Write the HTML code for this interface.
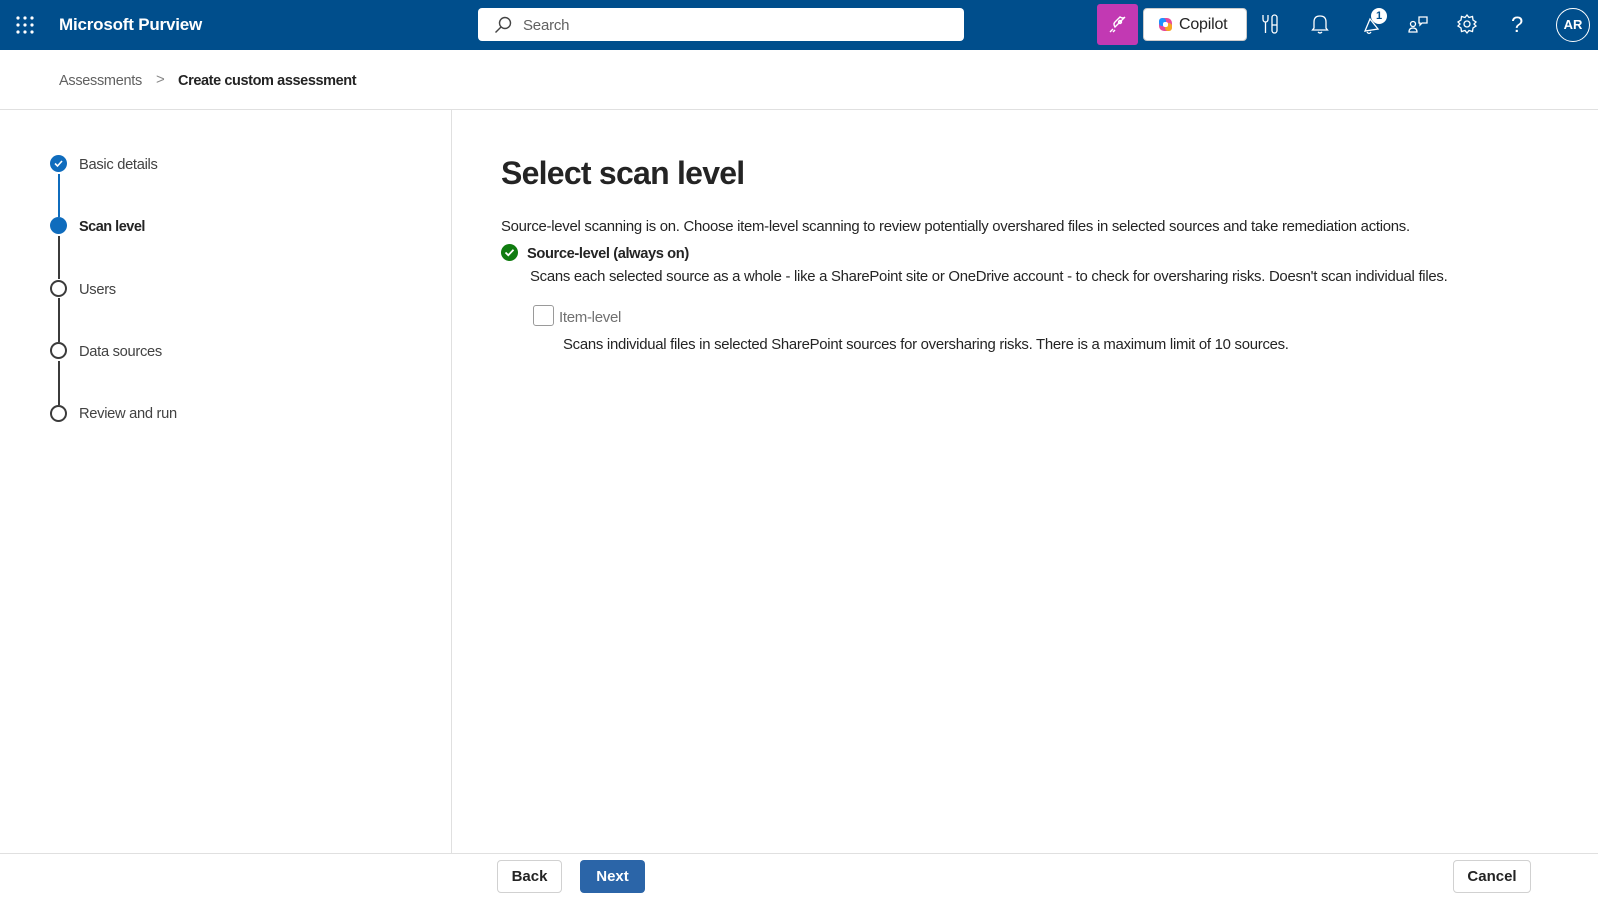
<!DOCTYPE html>
<html><head><meta charset="utf-8"><style>
*{margin:0;padding:0;box-sizing:border-box}
body{width:1598px;height:899px;overflow:hidden;background:#fff;font-family:"Liberation Sans",sans-serif;color:#242424;position:relative}
.abs{position:absolute}
.hdr{left:0;top:0;width:1598px;height:50px;background:#004e8c}
.t{position:absolute;white-space:nowrap;font-size:14px;letter-spacing:-0.2px}
.ic{position:absolute;top:13px}
.step{position:absolute;left:50px;width:17px;height:17px;border-radius:50%}
.ring{border:2px solid #3b3b3b;background:#fff}
.vl{position:absolute;left:58px;width:2px}
.btn{position:absolute;top:860px;height:33px;border-radius:4px;font-size:15px;font-weight:bold;display:flex;align-items:center;justify-content:center}
.p{font-size:14.9px;letter-spacing:-0.27px}
</style></head><body>
<div class="abs hdr"></div>
<svg class="abs" style="left:16px;top:16px" width="18" height="18" viewBox="0 0 18 18" fill="#fff"><circle cx="2" cy="2" r="1.6"/><circle cx="9" cy="2" r="1.6"/><circle cx="16" cy="2" r="1.6"/><circle cx="2" cy="9" r="1.6"/><circle cx="9" cy="9" r="1.6"/><circle cx="16" cy="9" r="1.6"/><circle cx="2" cy="16" r="1.6"/><circle cx="9" cy="16" r="1.6"/><circle cx="16" cy="16" r="1.6"/></svg>
<div class="t" style="left:59px;top:15px;color:#fff;font-size:17px;font-weight:bold;letter-spacing:-0.2px">Microsoft Purview</div>
<div class="abs" style="left:478px;top:8px;width:486px;height:33px;background:#fff;border-radius:4px"></div>
<svg class="abs" style="left:494px;top:16px" width="18" height="18" viewBox="0 0 18 18" fill="none" stroke="#444" stroke-width="1.4"><circle cx="11" cy="7" r="5.5"/><path d="M7 11 L1.5 16.5"/></svg>
<div class="t" style="left:523px;top:17px;color:#616161;font-size:15px">Search</div>
<div class="abs" style="left:1097px;top:4px;width:41px;height:41px;background:#c239b3;border-radius:3px"></div>
<svg class="abs" style="left:1108px;top:15px" width="19" height="19" viewBox="0 0 19 19" fill="none" stroke="#fff" stroke-width="1.4"><path d="M7 12 L12 7 Q15 4 17 2 Q15 4 12 2 L7 7 Q5 9 7 12 Z"/><circle cx="12" cy="7" r="1.5"/><path d="M5 14 L2 17 M7 15 L5 17"/></svg>
<div class="abs" style="left:1143px;top:8px;width:104px;height:33px;background:#fff;border-radius:4px;border:1px solid #ccc"></div>
<svg class="abs" style="left:1158px;top:17px" width="15" height="15" viewBox="0 0 15 15"><rect x="1" y="1" width="13" height="13" rx="5" fill="#e7499a"/><rect x="1" y="1" width="7" height="8" rx="3" fill="#1e90ff"/><rect x="7" y="6" width="7" height="8" rx="3" fill="#f5a623"/><rect x="5" y="5" width="5" height="5" fill="#fff" rx="2"/></svg>
<div class="t" style="left:1179px;top:16px;font-size:16px;color:#242424">Copilot</div>
<svg class="ic" style="left:1261px" width="20" height="22" viewBox="0 0 20 22" fill="none" stroke="#fff" stroke-width="1.3"><path d="M2 2 V6 Q2 9 4.5 9 Q7 9 7 6 V2 M4.5 9 V20"/><rect x="11" y="2" width="5" height="18" rx="2.5"/><path d="M11 12 H16"/></svg>
<svg class="ic" style="left:1311px" width="18" height="22" viewBox="0 0 18 22" fill="none" stroke="#fff" stroke-width="1.3"><path d="M3 15 V9 Q3 3 9 3 Q15 3 15 9 V15 L16.5 17 H1.5 Z"/><path d="M7 19 Q9 21 11 19"/></svg>
<svg class="ic" style="left:1362px" width="22" height="24" viewBox="0 0 22 24" fill="none" stroke="#fff" stroke-width="1.3"><path d="M3 18 L8 6 L16 16 Z M5 19 Q7 22 9 19"/></svg>
<div class="abs" style="left:1371px;top:8px;width:16px;height:16px;border-radius:50%;background:#fff;color:#004e8c;font-size:11px;font-weight:bold;text-align:center;line-height:16px">1</div>
<svg class="ic" style="left:1408px" width="22" height="22" viewBox="0 0 22 22" fill="none" stroke="#fff" stroke-width="1.3"><circle cx="5" cy="11" r="2.5"/><path d="M1 19 Q1 15 5 15 Q9 15 9 19 Z"/><path d="M11 4 H19 V10 H14 L12 12 V10 H11 Z"/></svg>
<svg class="ic" style="left:1456px" width="22" height="22" viewBox="0 0 22 22" fill="none" stroke="#fff" stroke-width="1.3"><circle cx="11" cy="11" r="3"/><path d="M11 2 L13 4.5 L16.5 3.5 L17 7 L20 9 L18 11 L20 13 L17 15 L16.5 18.5 L13 17.5 L11 20 L9 17.5 L5.5 18.5 L5 15 L2 13 L4 11 L2 9 L5 7 L5.5 3.5 L9 4.5 Z"/></svg>
<div class="t" style="left:1511px;top:12px;color:#fff;font-size:22px">?</div>
<div class="abs" style="left:1556px;top:8px;width:34px;height:34px;border-radius:50%;border:1.5px solid #fff;color:#fff;font-size:13px;font-weight:bold;text-align:center;line-height:31px">AR</div>

<div class="t" style="left:59px;top:73px;color:#616161;font-size:14.5px;letter-spacing:-0.3px">Assessments</div>
<div class="t" style="left:156px;top:71px;color:#888;font-size:15px">&gt;</div>
<div class="t" style="left:178px;top:73px;color:#242424;font-size:14.5px;font-weight:bold;letter-spacing:-0.4px">Create custom assessment</div>
<div class="abs" style="left:0;top:109px;width:1598px;height:1px;background:#e0e0e0"></div>
<div class="abs" style="left:451px;top:110px;width:1px;height:743px;background:#e0e0e0"></div>
<div class="abs" style="left:0;top:853px;width:1598px;height:1px;background:#e0e0e0"></div>

<div class="vl" style="top:174px;height:43px;background:#0f6cbd"></div>
<div class="vl" style="top:236px;height:43px;background:#3b3b3b"></div>
<div class="vl" style="top:298px;height:44px;background:#3b3b3b"></div>
<div class="vl" style="top:361px;height:44px;background:#3b3b3b"></div>
<div class="step" style="top:155px;background:#0f6cbd"></div>
<svg class="abs" style="left:53px;top:158px" width="11" height="11" viewBox="0 0 11 11" fill="none" stroke="#fff" stroke-width="1.6"><path d="M2 5.5 L4.5 8 L9 3"/></svg>
<div class="step" style="top:217px;background:#0f6cbd"></div>
<div class="step ring" style="top:280px"></div>
<div class="step ring" style="top:342px"></div>
<div class="step ring" style="top:405px"></div>
<div class="t" style="left:79px;top:157px;font-size:14.7px;color:#424242;letter-spacing:-0.3px">Basic details</div>
<div class="t" style="left:79px;top:219px;font-size:14.5px;font-weight:bold;letter-spacing:-0.5px">Scan level</div>
<div class="t" style="left:79px;top:282px;font-size:14.7px;color:#424242;letter-spacing:-0.3px">Users</div>
<div class="t" style="left:79px;top:344px;font-size:14.7px;color:#424242;letter-spacing:-0.3px">Data sources</div>
<div class="t" style="left:79px;top:406px;font-size:14.7px;color:#424242;letter-spacing:-0.3px">Review and run</div>

<div class="t" style="left:501px;top:155px;font-size:32px;font-weight:bold;letter-spacing:-0.75px">Select scan level</div>
<div class="t p" style="left:501px;top:219px">Source-level scanning is on. Choose item-level scanning to review potentially overshared files in selected sources and take remediation actions.</div>
<svg class="abs" style="left:501px;top:244px" width="17" height="17" viewBox="0 0 17 17"><circle cx="8.5" cy="8.5" r="8.5" fill="#107c10"/><path d="M4.5 8.5 L7.3 11.2 L12.5 5.8" fill="none" stroke="#fff" stroke-width="1.8"/></svg>
<div class="t" style="left:527px;top:246px;font-size:14.7px;font-weight:bold;letter-spacing:-0.4px">Source-level (always on)</div>
<div class="t p" style="left:530px;top:269px">Scans each selected source as a whole - like a SharePoint site or OneDrive account - to check for oversharing risks. Doesn't scan individual files.</div>
<div class="abs" style="left:533px;top:305px;width:21px;height:21px;border:1.5px solid #9a9a9a;border-radius:3px"></div>
<div class="t" style="left:559px;top:309px;font-size:15px;color:#707070;letter-spacing:-0.3px">Item-level</div>
<div class="t p" style="left:563px;top:337px">Scans individual files in selected SharePoint sources for oversharing risks. There is a maximum limit of 10 sources.</div>

<div class="btn" style="left:497px;width:65px;border:1px solid #d1d1d1;background:#fff;color:#242424">Back</div>
<div class="btn" style="left:580px;width:65px;background:#2b65a8;color:#fff">Next</div>
<div class="btn" style="left:1453px;width:78px;border:1px solid #d1d1d1;background:#fff;color:#242424">Cancel</div>
</body></html>
